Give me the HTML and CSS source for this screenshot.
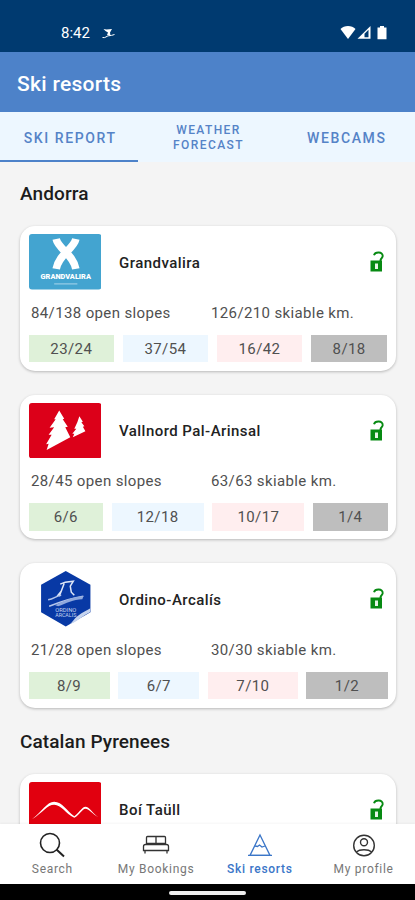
FILE: index.html
```html
<!DOCTYPE html>
<html lang="en">
  <head>
    <meta charset="UTF-8" />
    <meta name="viewport" content="width=device-width, initial-scale=1.0" />
    <title>Ski resorts</title>
    <link rel="stylesheet" href="styles.css">
  </head>
  <body>
    <svg class="symbols" width="0" height="0">
      <symbol id="unlocked" viewBox="0 0 14 21">
        <path d="M4 4.200C5 .5 13 .3 12.700 5.200C12.500 7.500 10.400 7 10.400 10" fill="none" stroke="#078a12" stroke-width="1.900" />
        <path d="M.5 9.500h11.500v11H.5z" fill="#078a12" />
        <path d="M5 12.500h3v5.500h-3z" fill="#e6f4e6" />
      </symbol>
    </svg>
    <div class="app">
      <div class="status-bar">
        <span class="time">8:42</span>
        <svg class="skier" width="13" height="11" viewBox="0 0 13 11">
          <path d="M1.500 1l3 .5L10 1 8 4.500 8.500 8 5 7 6 4.500 3.500 3z" fill="#fff" />
          <path d="M.5 9.500c3 .8 4-1.500 6-1.700s4-.5 6-1.300" fill="none" stroke="#fff" />
        </svg>
        <svg class="signals" width="48" height="16" viewBox="0 0 48 16">
          <path d="M.5 4C4 0 12 0 15.500 4L8 14z" fill="#fff" />
          <path d="M17.500 13.800L30.500 1v12.800z" fill="#fff" />
          <path d="M24.500 12.300v-3.500l4-4v7.500z" fill="#003a70" />
          <path d="M37.500 2.500h2.500V1h4v1.500h2.500v11.700h-9z" fill="#fff" />
        </svg>
      </div>
      <header class="header">
        <h1>Ski resorts</h1>
      </header>
      <div class="tabs">
        <div class="tab active">SKI REPORT</div>
        <div class="tab small">WEATHER<br>FORECAST</div>
        <div class="tab">WEBCAMS</div>
      </div>
      <main class="content">
        <h2>Andorra</h2>
        <div class="card">
          <div class="card-top">
            <svg class="logo" viewBox="0 0 72 55">
              <rect width="72" height="55" rx="3" fill="#43a4d0" />
              <path d="M27 5C29 15 44 20 46.500 34.500M46.500 5C44.500 15 29.500 20 27 34.500" fill="none" stroke="#fff" stroke-width="7.500" />
              <text x="36.500" y="45" textLength="50" lengthAdjust="spacingAndGlyphs" class="logo-name">GRANDVALIRA</text>
              <path d="M25 49.500h23" stroke="#a9d6eb" />
            </svg>
            <h3>Grandvalira</h3>
            <svg class="lock"><use href="#unlocked" /></svg>
          </div>
          <div class="stats">
            <span>84/138 open slopes</span>
            <span>126/210 skiable km.</span>
          </div>
          <div class="slopes">
            <div class="green">23/24</div>
            <div class="blue">37/54</div>
            <div class="red">16/42</div>
            <div class="black">8/18</div>
          </div>
        </div>
        <div class="card">
          <div class="card-top">
            <svg class="logo" viewBox="0 0 72 55">
              <rect width="72" height="55" rx="3" fill="#dc0019" />
              <path d="M30 7.500L35 15.500 33.500 16 38.500 23.500 36 24 41 34 17.500 46.500 19.500 40.500 17 41 22.500 31.500 19.500 31.500 25 24 20.500 24.500 26.500 16 25 16z" fill="#fff" />
              <path d="M50 13L53.500 18.500 52 19 55 23 53.500 23.500 56 28 43.500 34 45 30.500 43 30.500 47 25.500 45 25.500 48 19z" fill="#fff" />
            </svg>
            <h3>Vallnord Pal-Arinsal</h3>
            <svg class="lock"><use href="#unlocked" /></svg>
          </div>
          <div class="stats">
            <span>28/45 open slopes</span>
            <span>63/63 skiable km.</span>
          </div>
          <div class="slopes">
            <div class="green">6/6</div>
            <div class="blue">12/18</div>
            <div class="red">10/17</div>
            <div class="black">1/4</div>
          </div>
        </div>
        <div class="card">
          <div class="card-top">
            <svg class="logo" viewBox="0 0 72 55">
              <path d="M36.500 0L61 13.500V41L36.500 55 12 41V13.500z" fill="#0839a5" />
              <path d="M41 52.500c7-2 12-8 19.500-11.500L61 37c-7 4-12 6-17 12z" fill="#c6d4ee" />
              <path d="M31 13l5-2 8-1-3 5 1 6 3 3M35 12l-3 8-2 5M32 20l-4 5" fill="none" stroke="#dfe7f7" stroke-width="1.500" />
              <path d="M19 28.500c6-1 8-4 13-4.500M20 35c10-4 20-8 34-10" fill="none" stroke="#b4c5ea" stroke-width="1.500" />
              <path d="M26 34c8-4 15-8 28-9l-1 3c-9 0-16 4-24 7z" fill="#8fa8dc" />
              <text x="36.500" y="41" textLength="21" lengthAdjust="spacingAndGlyphs" class="logo-small">ORDINO</text>
              <text x="36.500" y="45.500" textLength="21" lengthAdjust="spacingAndGlyphs" class="logo-small">ARCALIS</text>
            </svg>
            <h3>Ordino-Arcalís</h3>
            <svg class="lock"><use href="#unlocked" /></svg>
          </div>
          <div class="stats">
            <span>21/28 open slopes</span>
            <span>30/30 skiable km.</span>
          </div>
          <div class="slopes">
            <div class="green">8/9</div>
            <div class="blue">6/7</div>
            <div class="red">7/10</div>
            <div class="black">1/2</div>
          </div>
        </div>
        <h2 class="next">Catalan Pyrenees</h2>
        <div class="card">
          <div class="card-top">
            <svg class="logo" viewBox="0 0 72 55">
              <rect width="72" height="55" rx="3" fill="#e1000f" />
              <path d="M3 37C13 29 18 19.500 25 19.500C33 19.500 38 29 45 34C51 29 53 24.500 56 24.500C60 24.500 63 31 69 35C63 32 60 26.500 56 26.500C53 26.500 50 33 45 35.500C36 31 32 22.500 25 22.500C18 22.500 14 30 3 37z" fill="#fff" />
            </svg>
            <h3>Boí Taüll</h3>
            <svg class="lock"><use href="#unlocked" /></svg>
          </div>
        </div>
      </main>
      <nav class="bottom-nav">
        <div class="nav-item">
          <svg width="28" height="26" viewBox="0 0 28 26" fill="none" stroke="#222">
            <circle cx="12" cy="11" r="9.500" stroke-width="1.600" />
            <path d="M18.500 17.500l7.500 7" stroke-width="2" />
          </svg>
          <span>Search</span>
        </div>
        <div class="nav-item">
          <svg width="28" height="26" viewBox="0 0 28 26" fill="none" stroke="#333" stroke-width="1.300">
            <path d="M4.500 12V5.500q0-1 1-1h17q1 0 1 1V12M14 4.500v7.500M4.500 11.500h19" />
            <path d="M3.500 12.500q-2 0-2 2V18.500h25v-4q0-2-2-2zM3 18.500v3M25 18.500v3" />
          </svg>
          <span>My Bookings</span>
        </div>
        <div class="nav-item active">
          <svg width="28" height="26" viewBox="0 0 28 26" fill="none" stroke="#3b76c8" stroke-width="1.300">
            <path d="M14 3L24 23.400H4z" />
            <path d="M2 23.400h24M9 14l2.500 .5 2-1.500 2.500 2 3-1" />
          </svg>
          <span>Ski resorts</span>
        </div>
        <div class="nav-item">
          <svg width="28" height="26" viewBox="0 0 28 26" fill="none" stroke="#333" stroke-width="1.400">
            <circle cx="14" cy="13.500" r="10.300" />
            <circle cx="14" cy="10.300" r="3.500" />
            <path d="M6.500 20c3-3 12-3 15 0" />
          </svg>
          <span>My profile</span>
        </div>
      </nav>
      <div class="gesture-bar"><div class="handle"></div></div>
    </div>
  </body>
</html>
```
FILE: styles.css
```css
* {
  box-sizing: border-box;
}
body {
  margin: 0;
  font-family: Roboto, sans-serif;
}
h1,
h2,
h3 {
  margin: 0;
  font-weight: 500;
}
.symbols {
  display: none;
}
.app {
  height: 900px;
  display: flex;
  flex-direction: column;
  background: #f4f4f4;
  overflow: hidden;
}
.status-bar {
  height: 52px;
  flex: none;
  display: flex;
  align-items: center;
  padding: 14px 27px 0 61px;
  background: #003a70;
  color: white;
}
.time {
  font-size: 15px;
}
.skier {
  margin-left: 12px;
}
.signals {
  margin-left: auto;
}
.header {
  height: 60px;
  flex: none;
  display: flex;
  align-items: center;
  padding: 3px 17px 0;
  background: #4d82c9;
  color: white;
}
.header h1 {
  font-size: 21px;
  letter-spacing: 0.3px;
}
.tabs {
  height: 50px;
  flex: none;
  display: flex;
  background: #edf7ff;
}
.tab {
  flex: 1;
  display: flex;
  align-items: center;
  justify-content: center;
  text-align: center;
  padding: 3px 0 0 2px;
  border-bottom: 2px solid transparent;
  color: #5583c7;
  font-size: 14px;
  font-weight: 500;
  letter-spacing: 1.6px;
}
.tab.small {
  font-size: 12px;
  line-height: 15px;
  letter-spacing: 1.4px;
}
.tab.active {
  border-color: #4d82c9;
}
.content {
  flex: 1;
  min-height: 0;
  overflow: hidden;
  padding: 20px 19px 0 20px;
}
.content h2 {
  font-size: 19px;
  line-height: 24px;
  margin-bottom: 20px;
  letter-spacing: 0.1px;
  color: #1c1c1c;
}
.content h2.next {
  margin-top: -2px;
}
.card {
  height: 144.5px;
  margin-bottom: 24px;
  padding: 8px 8.5px;
  border-radius: 15px;
  background: white;
  box-shadow: 0 1px 3px rgba(0, 0, 0, 0.25);
}
.card-top {
  display: flex;
  align-items: center;
}
.logo {
  width: 72.5px;
  height: 55.5px;
}
.logo-name {
  font-size: 7px;
  font-weight: 900;
  fill: white;
  text-anchor: middle;
}
.logo-small {
  font-size: 4.5px;
  fill: #c6d4ee;
  text-anchor: middle;
}
.card h3 {
  margin-left: 18px;
  padding-top: 2px;
  font-size: 15px;
  letter-spacing: 0.45px;
  color: #222;
}
.lock {
  width: 14px;
  height: 21px;
  margin: 0 4px 0 auto;
}
.stats {
  display: flex;
  margin: 14px 0 12px;
  padding-left: 2.5px;
  font-size: 15px;
  line-height: 19px;
  letter-spacing: 0.37px;
  color: #505050;
}
.stats span:first-child {
  width: 180px;
  flex: none;
}
.slopes {
  display: flex;
  gap: 8.5px;
}
.slopes div {
  flex: 1 1 auto;
  height: 27.5px;
  line-height: 28px;
  text-align: center;
  font-size: 15px;
  letter-spacing: 0.4px;
  color: #505050;
}
.slopes .green {
  background: #dff1d9;
}
.slopes .blue {
  background: #edf7ff;
}
.slopes .red {
  background: #ffeeef;
}
.slopes .black {
  background: #bebebe;
}
.bottom-nav {
  height: 60px;
  flex: none;
  display: flex;
  background: white;
  box-shadow: 0 -1px 2px rgba(0, 0, 0, 0.04);
}
.nav-item {
  flex: 1;
  display: flex;
  flex-direction: column;
  align-items: center;
  padding: 8px 0 0 1px;
  font-size: 12px;
  letter-spacing: 0.7px;
  color: #777;
}
.nav-item span {
  margin-top: 4px;
  line-height: 14px;
}
.nav-item.active {
  color: #3b76c8;
  font-weight: 500;
}
.gesture-bar {
  height: 16px;
  flex: none;
  display: flex;
  justify-content: center;
  padding-top: 7px;
  background: black;
}
.handle {
  width: 77px;
  height: 3.5px;
  border-radius: 2px;
  background: #eee;
}
```
